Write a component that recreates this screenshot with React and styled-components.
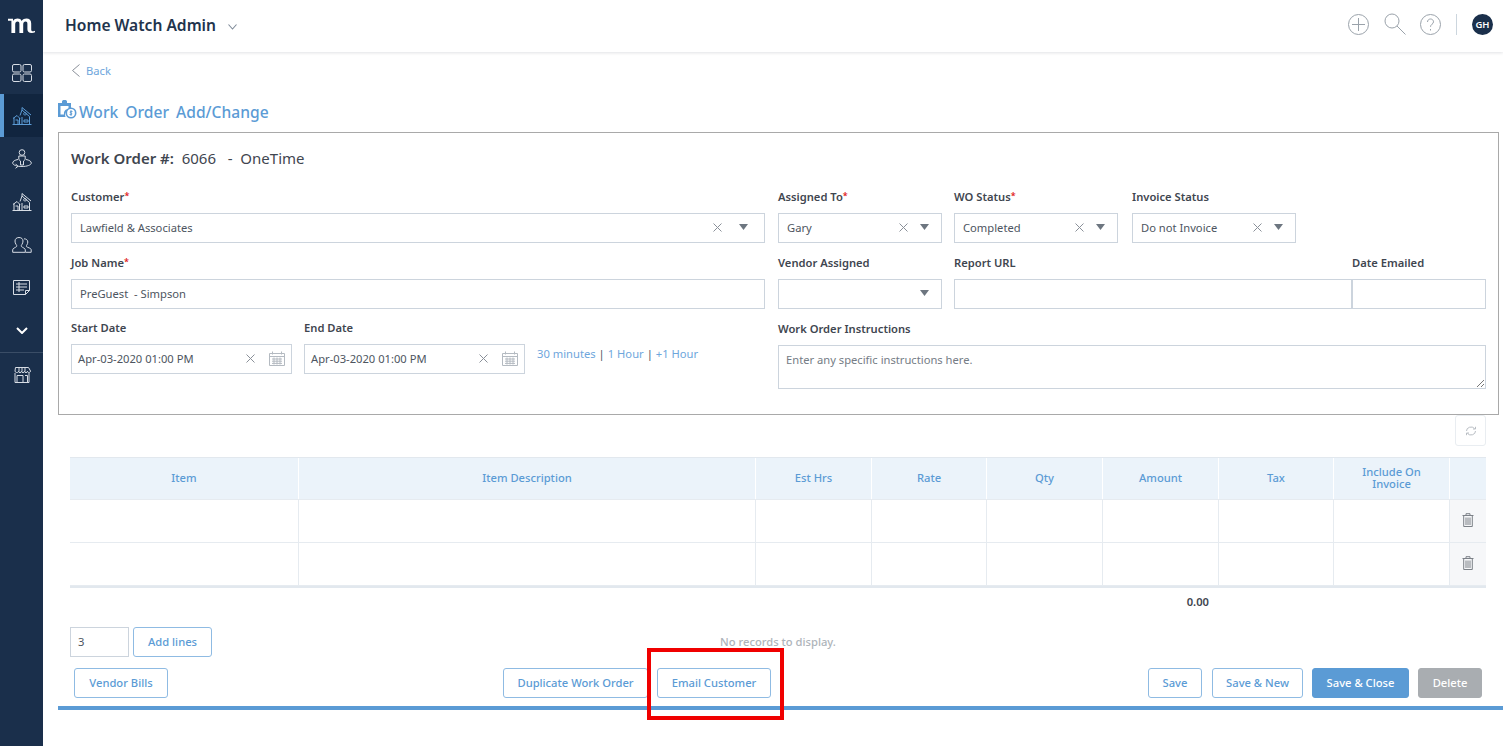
import React from "react";
import styled, { createGlobalStyle } from "styled-components";

const GlobalStyle = createGlobalStyle`
  html, body { margin: 0; padding: 0; background: #fff; }
  body { font-family: "Noto Sans", "Open Sans", sans-serif; color: #3f4650; overflow: hidden; }
  * { box-sizing: border-box; }
`;

const Page = styled.div`
  position: relative;
  display: flex;
  width: 1503px;
  height: 746px;
  overflow: hidden;
`;

const Sidebar = styled.nav`
  width: 43px;
  flex: none;
  background: #1a2f4b;
  display: flex;
  flex-direction: column;
`;

const Logo = styled.div`
  height: 51px;
  display: flex;
  align-items: center;
  justify-content: center;
`;

const NavItem = styled.div`
  height: 43px;
  flex: none;
  display: flex;
  align-items: center;
  justify-content: center;
  background: ${(p) => (p.$active ? "#11253f" : "transparent")};
  border-left: ${(p) => (p.$active ? "4px solid #5b9bd5" : "0")};
  padding-right: ${(p) => (p.$active ? "4px" : "0")};
`;

const NavDivider = styled.div`
  height: 1px;
  flex: none;
  background: #3a4d66;
`;

const Main = styled.div`
  flex: 1;
  min-width: 0;
  display: flex;
  flex-direction: column;
`;

const Header = styled.header`
  height: 52px;
  flex: none;
  display: flex;
  align-items: center;
  padding: 0 10px 3px 22px;
  box-shadow: 0 1px 3px rgba(40, 50, 70, 0.14);
`;

const AppTitle = styled.div`
  font-size: 15.6px;
  font-weight: 600;
  color: #22344d;
`;

const HeaderRight = styled.div`
  margin-left: auto;
  display: flex;
  align-items: center;
`;

const VDivider = styled.div`
  width: 1px;
  height: 21px;
  background: #ccd6de;
  margin: 0 15px;
`;

const Avatar = styled.div`
  width: 21px;
  height: 21px;
  border-radius: 50%;
  background: #1a2f4b;
  color: #fff;
  font-size: 9.5px;
  font-weight: 600;
  display: flex;
  align-items: center;
  justify-content: center;
`;

const Content = styled.div`
  flex: 1;
  padding: 0 0 0 15px;
  display: flex;
  flex-direction: column;
`;

const BackLink = styled.div`
  height: 36px;
  display: flex;
  align-items: center;
  gap: 6px;
  padding: 1px 0 0 14px;
  font-size: 11.2px;
  color: #6ea6dc;
`;

const PageTitle = styled.h1`
  margin: 0;
  height: 44px;
  padding-top: 13px;
  display: flex;
  align-items: flex-start;
  gap: 2px;
  font-size: 15.6px;
  font-weight: 500;
  color: #5b9bd5;
  word-spacing: 3px;
  line-height: 22px;
`;

const TitleIcon = styled.svg`
  flex: none;
  margin-top: -1px;
`;

const FormBox = styled.section`
  width: 1441px;
  height: 283px;
  border: 1px solid #a9a9a9;
  padding: 13px 13px 0 12px;
  flex: none;
`;

const FormTitle = styled.div`
  font-size: 15px;
  line-height: 24px;
  height: 43px;
  color: #3f4650;
  white-space: pre;
  b { font-weight: 600; }
`;

const FormGrid = styled.div`
  display: grid;
  grid-template-columns: 694px 708px;
  column-gap: 13px;
`;

const Col = styled.div`
  display: flex;
  flex-direction: column;
`;

const Row = styled.div`
  display: flex;
  height: ${(p) => p.$h}px;
  flex: none;
`;

const Field = styled.div`
  width: ${(p) => (p.$w ? `${p.$w}px` : "auto")};
  flex: ${(p) => (p.$w ? "none" : 1)};
  margin-right: ${(p) => p.$mr || 0}px;
  display: flex;
  flex-direction: column;
`;

const Label = styled.label`
  font-size: 11.2px;
  font-weight: 600;
  color: #3f4650;
  line-height: 16px;
  height: 16px;
  margin-bottom: 8px;
  white-space: nowrap;
  em { color: #e02020; font-style: normal; font-size: 9px; position: relative; top: -2px; line-height: 0; }
`;

const Input = styled.div`
  height: 30px;
  flex: none;
  border: 1px solid #ccd4dd;
  display: flex;
  align-items: center;
  padding: 0 ${(p) => p.$pr ?? 8}px 2px ${(p) => p.$pl ?? 8}px;
  font-size: 11.2px;
  color: #4d5560;
  white-space: pre;
  background: #fff;
`;

const InputText = styled.span`
  flex: 1;
  min-width: 0;
`;

const DateLinks = styled.div`
  padding: 26px 0 0 12px;
  font-size: 11.2px;
  color: #6ea6dc;
  white-space: pre;
  line-height: 16px;
  i { font-style: normal; color: #4d5560; margin: 0 3px; }
`;

const TextArea = styled.div`
  position: relative;
  height: 44px;
  border: 1px solid #ccd4dd;
  padding: 6px 7px;
  font-size: 11.2px;
  color: #757c85;
`;

const ResizeGrip = styled.svg`
  position: absolute;
  right: 1px;
  bottom: 1px;
`;

const RefreshRow = styled.div`
  height: 42px;
  display: flex;
  justify-content: flex-end;
  padding-right: 17px;
  flex: none;
`;

const RefreshBtn = styled.div`
  width: 31px;
  height: 31px;
  border: 1px solid #e9edf1;
  border-radius: 3px;
  display: flex;
  align-items: center;
  justify-content: center;
`;

const Table = styled.div`
  margin-left: 12px;
  width: 1416px;
  flex: none;
  border-bottom: 2px solid #e2e8ee;
`;

const TableRow = styled.div`
  display: grid;
  grid-template-columns: 229px 457px 116px 115px 116px 116px 115px 116px 36px;
  height: 43px;
  background: ${(p) => (p.$head ? "#ebf3fa" : "#fff")};
  border-top: ${(p) => (p.$head ? "1px solid #e2e8ee" : "0")};
  border-bottom: 1px solid #e6ebf0;
`;

const HeadCell = styled.div`
  display: flex;
  align-items: center;
  justify-content: center;
  text-align: center;
  padding-bottom: 2px;
  font-size: 11.2px;
  line-height: 12px;
  font-weight: 500;
  color: #5b9bd5;
  border-right: ${(p) => (p.$last ? "0" : "1px solid #fff")};
`;

const Cell = styled.div`
  display: flex;
  align-items: center;
  justify-content: center;
  padding-bottom: 3px;
  background: ${(p) => (p.$shade ? "#f6f7f9" : "transparent")};
  border-right: ${(p) => (p.$last ? "0" : "1px solid #e6ebf0")};
`;

const TotalRow = styled.div`
  width: 1151px;
  height: 39px;
  flex: none;
  display: flex;
  justify-content: flex-end;
  align-items: center;
  padding-bottom: 13px;
  font-size: 11.2px;
  font-weight: 600;
  color: #3f4650;
`;

const LinesRow = styled.div`
  display: flex;
  align-items: center;
  height: 30px;
  margin-left: 12px;
  gap: 4px;
  flex: none;
`;

const LinesInput = styled(Input)`
  width: 59px;
  padding-left: 7px;
`;

const NoRecords = styled.div`
  width: 1416px;
  margin-left: -200px;
  padding: 0 0 1px 108px;
  text-align: center;
  font-size: 11.2px;
  font-weight: 500;
  color: #aeb4ba;
`;

const ButtonRow = styled.div`
  margin: 11px 0 0 16px;
  width: 1408px;
  height: 30px;
  display: flex;
  flex: none;
`;

const Btn = styled.button`
  height: 30px;
  width: ${(p) => p.$w}px;
  margin-left: ${(p) => p.$ml || 0}px;
  padding: 0 0 2px;
  font-family: inherit;
  font-size: 11.2px;
  font-weight: 500;
  border-radius: 3px;
  border: 1px solid ${(p) => p.$fill || "#8fbbe3"};
  background: ${(p) => p.$fill || "#fff"};
  color: ${(p) => (p.$fill ? "#fff" : "#5b9bd5")};
  white-space: nowrap;
`;

const BlueLine = styled.div`
  height: 4px;
  margin-top: 8px;
  background: #5b9bd5;
  flex: none;
`;

const Highlight = styled.div`
  position: absolute;
  left: 647px;
  top: 648px;
  width: 137px;
  height: 72px;
  border: 4px solid #f00000;
  pointer-events: none;
`;

const I = ({ w = 22, h = 22, c = "#d7dde5", sw = 1, children, style }) => (
  <svg width={w} height={h} viewBox={`0 0 ${w} ${h}`} fill="none" stroke={c} strokeWidth={sw} style={style}>
    {children}
  </svg>
);

const Clear = ({ ml }) => (
  <I w={9} h={9} c="#8a9099" style={{ marginRight: ml, flex: "none" }}>
    <path d="M.5.5l8 8M8.5.5l-8 8" />
  </I>
);

const Caret = () => (
  <svg width="9" height="6" viewBox="0 0 9 6" style={{ flex: "none" }}>
    <path d="M0 0h9L4.5 6z" fill="#6d7680" />
  </svg>
);

const Calendar = () => (
  <I w={16} h={15} c="#b4bac1" style={{ flex: "none" }}>
    <path d="M.5 2.5h15v12H.5zM.5 5.5h15M3.5.5v3M12.5.5v3M3 8h10M3 10.2h10M3 12.4h10M5 6.5v7M8 6.5v7M11 6.5v7" />
  </I>
);

const Trash = () => (
  <I w={12} h={14} c="#7c8188">
    <path d="M.5 2.5h11M4 2.5V.7h4v1.8M1.7 2.5v11h8.6v-11M4 4.5v7.5M6 4.5v7.5M8 4.5v7.5" />
  </I>
);

const SelectField = ({ label, req, value, w, mr }) => (
  <Field $w={w} $mr={mr}>
    <Label>{label}{req && <em>*</em>}</Label>
    <Input $pr={12}>
      <InputText>{value}</InputText>
      {value && <Clear ml={12} />}
      <Caret />
    </Input>
  </Field>
);

const DateField = ({ label, value, w, mr }) => (
  <Field $w={w} $mr={mr}>
    <Label>{label}</Label>
    <Input $pl={6} $pr={6}>
      <InputText>{value}</InputText>
      <Clear ml={14} />
      <Calendar />
    </Input>
  </Field>
);

const columns = ["Item", "Item Description", "Est Hrs", "Rate", "Qty", "Amount", "Tax", "Include On Invoice", ""];

const GridRow = () => (
  <TableRow>
    {columns.map((col, i) => (
      <Cell key={i} $last={i === 8} $shade={i === 8}>
        {i === 8 && <Trash />}
      </Cell>
    ))}
  </TableRow>
);

const HouseIcon = ({ c }) => (
  <I w={20} h={18} c={c}>
    <path d="M.5 17.500h19M1 11.500l4-3 3 3M2 10.500v7M7.500 11v6.500M3.500 13h2.500v4.500M8 8.500L10 3v-2.500l9 7.500M10 3l7.500 6.500v8M10 10v7.500M12 13h4v2h-4zM13 5.500a1.300 1.300 0 1 0 .01 0" />
  </I>
);

export default function App() {
  return (
    <Page>
      <GlobalStyle />
      <Sidebar>
        <Logo>
          <svg width="27" height="15" viewBox="0 0 27 15">
            <path d="M0 .8h5V3C6.200 1.400 7.800.6 9.600.6c1.900 0 3.300.8 4 2.400C14.900 1.400 16.600.6 18.400.6c3 0 4.800 1.800 4.800 5v5.900c0 1.200.5 1.800 1.500 1.800.8 0 1.500-.2 2.300-.6v1.500c-1 .6-2.200.8-3.200.8-2.900 0-4.400-1.400-4.400-3.800V6c0-1.600-.6-2.400-1.800-2.400-1.600 0-2.400 1.200-2.400 2.900V15h-3.800V6c0-1.600-.6-2.400-1.800-2.400-1.600 0-2.400 1.200-2.400 2.900V15H3.400V2.800H0z" fill="#fff" />
          </svg>
        </Logo>
        <NavItem>
          <I w={20} h={18}>
            <rect x=".5" y=".5" width="8.500" height="7.500" rx="1.500" />
            <rect x="11" y=".5" width="8.500" height="7.500" rx="1.500" />
            <rect x=".5" y="10" width="8.500" height="7.500" rx="1.500" />
            <rect x="11" y="10" width="8.500" height="7.500" rx="1.500" />
          </I>
        </NavItem>
        <NavItem $active>
          <HouseIcon c="#5b9bd5" />
        </NavItem>
        <NavItem>
          <I w={20} h={20}>
            <circle cx="10" cy="3.500" r="2.800" />
            <path d="M6.800 7h6.400v3.500L11.500 12v4h-3v-4l-1.700-1.500zM6 10.500C2.800 11 .7 12.300.7 14c0 2 4 3.500 9.300 3.500 5 0 9.300-1.500 9.300-3.500 0-1.700-2.100-3-5.300-3.500M3.500 14.800L6 17.300l-2.500 2" />
          </I>
        </NavItem>
        <NavItem>
          <HouseIcon />
        </NavItem>
        <NavItem>
          <I w={20} h={16}>
            <path d="M.7 15.300v-2.500c0-1.500 2.800-2.200 3.800-3.200.5-.6.200-1.300-.4-2.100C3.300 6.500 3 5.300 3 4c0-2 1.500-3.500 4-3.500S11 2 11 4c0 1.300-.4 2.500-1.100 3.500-.6.800-.9 1.500-.4 2.100 1 1 3.800 1.700 3.800 3.200v2.500zM12 1.800c2.300 0 3.800 1.300 3.800 3.200 0 1-.3 2-.9 2.900-.5.700-.7 1.300-.3 1.800.9.900 4.600 1.400 4.600 3v2.600h-5.600" />
          </I>
        </NavItem>
        <NavItem>
          <I w={17} h={15}>
            <path d="M.5.500h16v10l-4 4H.5zM12.500 14.500v-4h4M3 4h11M3 7h11M3 10h8M6 2v10" />
          </I>
        </NavItem>
        <NavItem>
          <I w={12} h={7} c="#fff" sw={2}>
            <path d="M1 1l5 5 5-5" />
          </I>
        </NavItem>
        <NavDivider />
        <NavItem>
          <I w={18} h={16}>
            <path d="M2.500.5h13l2 3.500c0 2-3 2-3 .3 0 1.700-3 1.700-3 0 0 1.700-3 1.700-3 0 0 1.700-3 1.700-3 0 0 1.700-3.500 1.700-3.500-.3zM2 6v9.500h14V6M4 8.500h6v7H4zM12 8.500h2.500v7H12M6 .5v4M9 .5v4M12 .5v4" />
          </I>
        </NavItem>
      </Sidebar>

      <Main>
        <Header>
          <AppTitle>Home Watch Admin</AppTitle>
          <I w={9} h={6} c="#7f8b99" sw={1.1} style={{ marginLeft: 12, marginTop: 4 }}>
            <path d="M.5.500L4.500 5l4-4.500" />
          </I>
          <HeaderRight>
            <I w={21} h={21} c="#9aa2aa" style={{ marginRight: 15 }}>
              <circle cx="10.500" cy="10.500" r="10" />
              <path d="M10.500 4v13M4 10.500h13" />
            </I>
            <I w={22} h={22} c="#9aa2aa" style={{ marginRight: 14, marginBottom: 2 }}>
              <circle cx="8" cy="8" r="7" />
              <path d="M13 13l8.500 8.500" />
            </I>
            <I w={21} h={21} c="#9aa2aa">
              <circle cx="10.500" cy="10.500" r="10" />
              <path d="M7.500 8c0-1.800 1.300-3 3-3s3 1.200 3 2.800c0 2.400-3 2.400-3 5M10.500 15v1.500" />
            </I>
            <VDivider />
            <Avatar>GH</Avatar>
          </HeaderRight>
        </Header>

        <Content>
          <BackLink>
            <I w={8} h={13} c="#8a9099">
              <path d="M7.500.5l-7 6 7 6" />
            </I>
            Back
          </BackLink>
          <PageTitle>
            <TitleIcon width="19" height="19" viewBox="0 0 19 19">
              <path d="M0 3h4V1.500C4 .5 5 0 6 0h1c1 0 2 .5 2 1.500V3h4v8H9a5.500 5.500 0 0 0-1.500 6H0z" fill="#5b9bd5" />
              <path d="M2.500 6h8v3.500H8A5 5 0 0 0 6 14.500H2.500z" fill="#fff" />
              <circle cx="13" cy="13" r="4.700" fill="#fff" stroke="#5b9bd5" strokeWidth="1.600" />
              <path d="M13 10v6M14.500 11.500h-2.200v1.500h1.400v1.500h-2.200" stroke="#5b9bd5" strokeWidth=".9" fill="none" />
            </TitleIcon>
            Work Order Add/Change
          </PageTitle>

          <FormBox>
            <FormTitle>
              <b>Work Order #:</b>{"  6066   -  OneTime"}
            </FormTitle>
            <FormGrid>
              <Col>
                <Row $h={66}>
                  <Field>
                    <Label>Customer<em>*</em></Label>
                    <Input $pr={16}>
                      <InputText>Lawfield &amp; Associates</InputText>
                      <Clear ml={17} />
                      <Caret />
                    </Input>
                  </Field>
                </Row>
                <Row $h={65}>
                  <Field>
                    <Label>Job Name<em>*</em></Label>
                    <Input>PreGuest  - Simpson</Input>
                  </Field>
                </Row>
                <Row $h={60}>
                  <DateField label="Start Date" value="Apr-03-2020 01:00 PM" w={221} mr={12} />
                  <DateField label="End Date" value="Apr-03-2020 01:00 PM" w={221} />
                  <DateLinks>
                    30 minutes<i>|</i>1 Hour<i>|</i>+1 Hour
                  </DateLinks>
                </Row>
              </Col>
              <Col>
                <Row $h={66}>
                  <SelectField label="Assigned To" req value="Gary" w={164} mr={12} />
                  <SelectField label="WO Status" req value="Completed" w={164} mr={14} />
                  <SelectField label="Invoice Status" value="Do not Invoice" w={164} />
                </Row>
                <Row $h={66}>
                  <SelectField label="Vendor Assigned" w={164} mr={12} />
                  <Field $w={398}>
                    <Label>Report URL</Label>
                    <Input />
                  </Field>
                  <Field $w={134}>
                    <Label>Date Emailed</Label>
                    <Input />
                  </Field>
                </Row>
                <Field>
                  <Label>Work Order Instructions</Label>
                  <TextArea>
                    Enter any specific instructions here.
                    <ResizeGrip width="8" height="8" viewBox="0 0 8 8" fill="none" stroke="#777">
                      <path d="M1 8l7-7M5 8l3-3" />
                    </ResizeGrip>
                  </TextArea>
                </Field>
              </Col>
            </FormGrid>
          </FormBox>

          <RefreshRow>
            <RefreshBtn>
              <I w={12} h={10} c="#b9bec4">
                <path d="M1.500 5a4.500 4 0 0 1 8-2.500M10.500 5a4.500 4 0 0 1-8 2.500M8 3h2.500V.8M4 7H1.500v2.200" />
              </I>
            </RefreshBtn>
          </RefreshRow>

          <Table>
            <TableRow $head>
              {columns.map((col, i) => (
                <HeadCell key={i} $last={i === 8}>
                  {i === 7 ? <span>Include On<br />Invoice</span> : col}
                </HeadCell>
              ))}
            </TableRow>
            <GridRow />
            <GridRow />
          </Table>

          <TotalRow>0.00</TotalRow>

          <LinesRow>
            <LinesInput>3</LinesInput>
            <Btn $w={79}>Add lines</Btn>
            <NoRecords>No records to display.</NoRecords>
          </LinesRow>

          <ButtonRow>
            <Btn $w={94}>Vendor Bills</Btn>
            <Btn $w={145} $ml={335}>Duplicate Work Order</Btn>
            <Btn $w={114} $ml={9}>Email Customer</Btn>
            <Btn $w={54} $ml={377}>Save</Btn>
            <Btn $w={91} $ml={10}>Save &amp; New</Btn>
            <Btn $w={97} $ml={9} $fill="#5b9bd5">Save &amp; Close</Btn>
            <Btn $w={64} $ml={9} $fill="#a9adb1">Delete</Btn>
          </ButtonRow>

          <BlueLine />
        </Content>
      </Main>
      <Highlight />
    </Page>
  );
}
